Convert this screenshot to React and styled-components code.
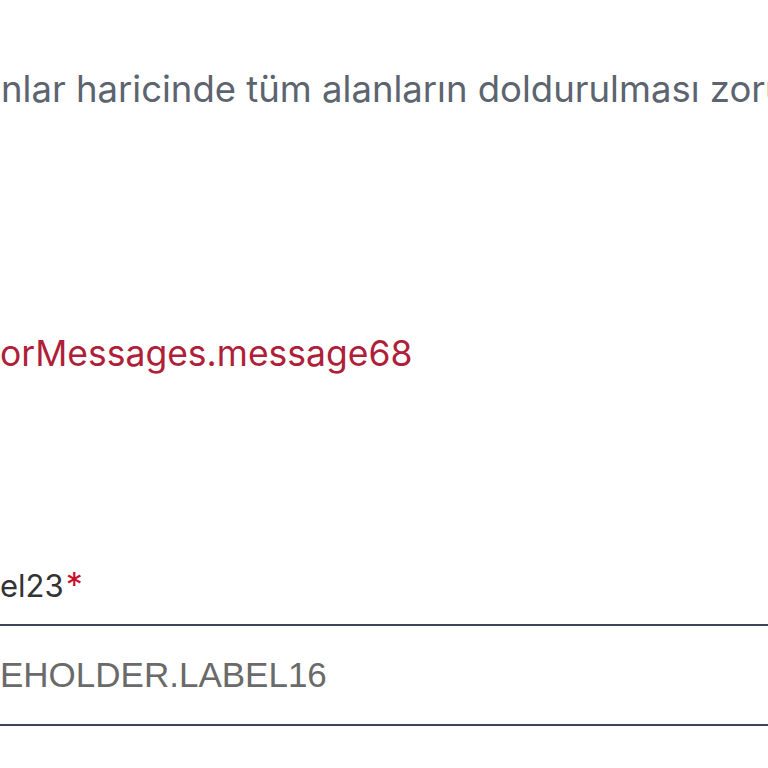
import styled, { createGlobalStyle } from "styled-components";

const GlobalStyle = createGlobalStyle`
  html, body {
    margin: 0;
    padding: 0;
    background: #ffffff;
    overflow: hidden;
  }
`;

function App() {
  return (
    <>
      <GlobalStyle />
      <Page>
        <Aciklama>nlar haricinde tüm alanların doldurulması zorunludur.</Aciklama>
        <HataMesaji>orMessages.message68</HataMesaji>
        <Alan>
          <Etiket>
            el23<Yildiz>*</Yildiz>
          </Etiket>
          <Girdi type="text" placeholder="EHOLDER.LABEL16" />
        </Alan>
      </Page>
    </>
  );
}

const Page = styled.div`
  width: 768px;
  height: 768px;
  overflow: hidden;
  display: flex;
  flex-direction: column;
  padding-top: 69px;
  box-sizing: border-box;
  font-family: Inter, "Noto Sans", sans-serif;
`;

const Aciklama = styled.p`
  margin: 0;
  font-size: 36.5px;
  line-height: 40px;
  color: #5c6470;
  white-space: nowrap;
  padding-left: 1px;
`;

const HataMesaji = styled.p`
  margin: 225px 0 0;
  font-size: 35.5px;
  line-height: 40px;
  color: #b01f3a;
  white-space: nowrap;
`;

const Alan = styled.div`
  display: flex;
  flex-direction: column;
  margin-top: 191px;
`;

const Etiket = styled.label`
  font-size: 31px;
  line-height: 40px;
  color: #333333;
  white-space: nowrap;
`;

const Yildiz = styled.span`
  color: #c8102e;
  margin-left: 2px;
  font-size: 34px;
`;

const Girdi = styled.input`
  margin: 18px 0 0 -24px;
  width: 820px;
  height: 102px;
  box-sizing: border-box;
  border: 2px solid #3b4658;
  background: #ffffff;
  padding: 0 0 0 22px;
  font-family: "Liberation Sans", Arial, sans-serif;
  font-size: 35px;
  color: #333;
  outline: none;
  &::placeholder {
    color: #6a6a6a;
  }
`;

export default App;
